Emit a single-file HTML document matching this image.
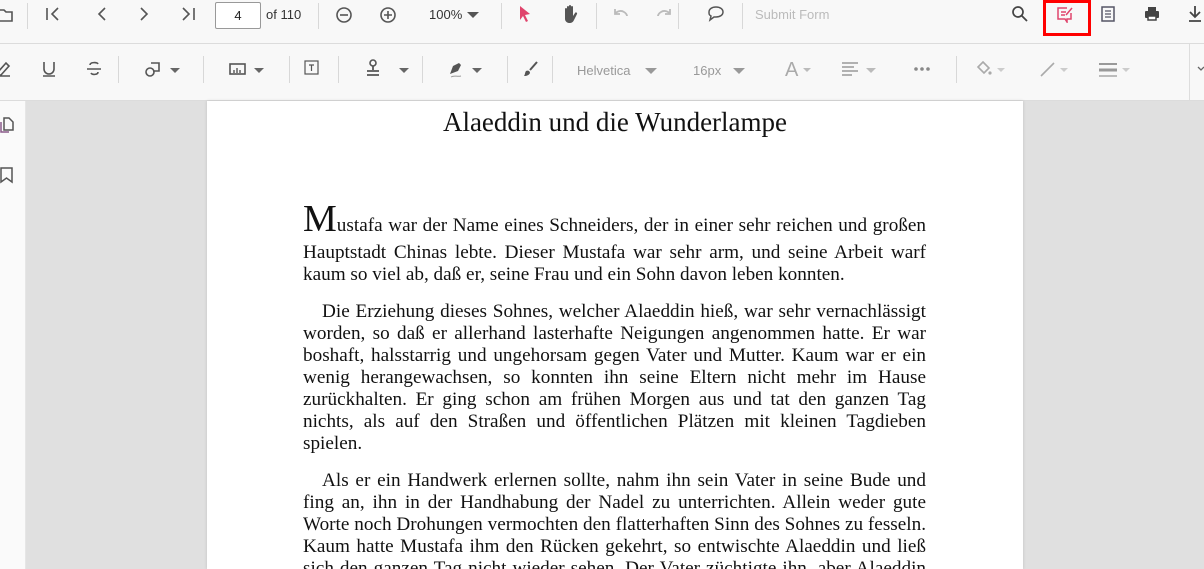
<!DOCTYPE html>
<html style="overflow:hidden;width:1204px;height:569px"><head><meta charset="utf-8"><style>
*{margin:0;padding:0;box-sizing:border-box}
body{width:1204px;height:569px;overflow:hidden;background:#e0e0e0;font-family:"Liberation Sans",sans-serif;position:relative}
.tb1{position:absolute;left:0;top:0;width:1204px;height:44px;background:#f8f8f8;border-bottom:1px solid #dcdcdc}
.tb2{position:absolute;left:0;top:44px;width:1204px;height:57px;background:#f8f8f8;border-bottom:1px solid #dcdcdc}
.side{position:absolute;left:0;top:101px;width:26px;height:468px;background:#fafafa;border-right:1px solid #e6e6e6}
.page{position:absolute;left:207px;top:101px;width:816px;height:468px;background:#fff;box-shadow:0 0 3px rgba(0,0,0,.15)}
.ic{position:absolute}
.sep{position:absolute;width:1px;background:#d8d8d8}
.t{position:absolute;font-size:13px;color:#555}
.clip{position:absolute;left:0;top:0;width:1204px;height:569px;overflow:hidden}
.txt{position:absolute;left:0;top:2px;width:1204px;height:567px}
.ln{position:absolute;left:303px;width:623px;font-family:"Liberation Serif",serif;font-size:19.2px;line-height:22px;color:#111;white-space:nowrap}
.j{text-align:justify;text-align-last:justify;white-space:normal}
.title{position:absolute;left:207px;width:816px;top:105px;text-align:center;font-family:"Liberation Serif",serif;font-size:27px;color:#111}
.car{display:inline-block;width:0;height:0;border-left:5px solid transparent;border-right:5px solid transparent;border-top:5px solid #666}
</style></head><body><div class="clip">
<div class="tb1"></div><div class="tb2"></div><div class="side"></div><div class="page"></div>

<svg class="ic" style="left:0;top:6px" width="14" height="18" viewBox="0 0 14 18"><path d="M-2 4h6l2 2h6v9H-2z" fill="none" stroke="#555" stroke-width="1.6"/></svg>
<div class="sep" style="left:27px;top:3px;height:26px"></div>
<svg class="ic" style="left:44px;top:6px" width="20" height="16"><path d="M3 2v12M14 2L8 8l6 6" fill="none" stroke="#555" stroke-width="1.6"/></svg>
<svg class="ic" style="left:92px;top:6px" width="20" height="16"><path d="M13 2L7 8l6 6" fill="none" stroke="#555" stroke-width="1.6"/></svg>
<svg class="ic" style="left:134px;top:6px" width="20" height="16"><path d="M7 2l6 6-6 6" fill="none" stroke="#555" stroke-width="1.6"/></svg>
<svg class="ic" style="left:178px;top:6px" width="20" height="16"><path d="M5 2l6 6-6 6M16 2v12" fill="none" stroke="#555" stroke-width="1.6"/></svg>
<div class="ic" style="left:215px;top:2px;width:46px;height:27px;border:1px solid #999;border-radius:2px;background:#fff;font-size:13px;text-align:center;line-height:25px;color:#222">4</div>
<div class="t" style="left:266px;top:7px;color:#333">of 110</div>
<div class="sep" style="left:318px;top:3px;height:26px"></div>
<svg class="ic" style="left:334px;top:5px" width="20" height="20"><circle cx="10" cy="10" r="7" fill="none" stroke="#555" stroke-width="1.6"/><path d="M6 10h8" stroke="#555" stroke-width="1.6"/></svg>
<svg class="ic" style="left:378px;top:5px" width="20" height="20"><circle cx="10" cy="10" r="7" fill="none" stroke="#555" stroke-width="1.6"/><path d="M6 10h8M10 6v8" stroke="#555" stroke-width="1.6"/></svg>
<div class="t" style="left:429px;top:7px;color:#333">100%</div>
<span class="ic car" style="left:467px;top:12px;border-top-color:#555;border-width:6px 6px 0"></span>
<div class="sep" style="left:501px;top:3px;height:26px"></div>
<svg class="ic" style="left:517px;top:5px" width="16" height="18"><path d="M3 1l10 8-5 1 3 6-2 1-3-6-3 4z" fill="#e0446c"/></svg>
<svg class="ic" style="left:561px;top:4px" width="18" height="20"><path d="M4 10V5a1 1 0 012 0v4V3a1 1 0 012 0v6V2a1 1 0 012 0v7V3a1 1 0 012 0v9l2-3a1 1 0 012 1l-3 6c-1 2-2 3-5 3H8c-2 0-4-2-4-4z" fill="#555"/></svg>
<div class="sep" style="left:596px;top:3px;height:26px"></div>
<svg class="ic" style="left:611px;top:6px" width="20" height="14"><path d="M4 3v5h5M4 8c2-3 6-4 9-2 2 1 3 3 3 4" fill="none" stroke="#bbb" stroke-width="1.8"/></svg>
<svg class="ic" style="left:654px;top:6px" width="20" height="14"><path d="M16 3v5h-5M16 8c-2-3-6-4-9-2-2 1-3 3-3 4" fill="none" stroke="#bbb" stroke-width="1.8"/></svg>
<div class="sep" style="left:678px;top:3px;height:26px"></div>
<svg class="ic" style="left:706px;top:5px" width="20" height="18"><path d="M10 2c4 0 7 2 7 5s-3 5-7 5H8l-4 3 1-4C3 10 3 9 3 7c0-3 3-5 7-5z" fill="none" stroke="#555" stroke-width="1.5"/></svg>
<div class="sep" style="left:742px;top:3px;height:26px"></div>
<div class="t" style="left:755px;top:7px;color:#bbb">Submit Form</div>
<svg class="ic" style="left:1011px;top:5px" width="18" height="18"><circle cx="7" cy="7" r="5" fill="none" stroke="#444" stroke-width="1.7"/><path d="M11 11l5 5" stroke="#444" stroke-width="1.8"/></svg>
<div class="ic" style="left:1043px;top:0;width:48px;height:36px;border:3px solid #f00"></div>
<svg class="ic" style="left:1056px;top:5px" width="18" height="18"><path d="M11 3H2v11h7l2 3v-3h4V8" fill="none" stroke="#e0446c" stroke-width="1.5"/><path d="M5 7h5M5 10h4M10 10l6-7" stroke="#e0446c" stroke-width="1.5"/></svg>
<svg class="ic" style="left:1100px;top:5px" width="16" height="18"><rect x="2" y="2" width="12" height="14" fill="none" stroke="#556" stroke-width="1.5"/><path d="M5 6h6M5 9h6M5 12h6" stroke="#556" stroke-width="1.3"/></svg>
<svg class="ic" style="left:1143px;top:5px" width="18" height="18"><rect x="5" y="2" width="8" height="4" fill="#444"/><rect x="2" y="6" width="14" height="7" rx="1" fill="#444"/><rect x="5" y="11" width="8" height="4" fill="#fff" stroke="#444" stroke-width="1.5"/></svg>
<svg class="ic" style="left:1186px;top:4px" width="18" height="20"><path d="M9 2v10M4 8l5 5 5-5M3 17h12" fill="none" stroke="#444" stroke-width="1.8"/></svg>

<svg class="ic" style="left:0;top:60px" width="14" height="18"><path d="M-2 12l8-9 3 3-8 9H-2zM-2 16h12" fill="none" stroke="#555" stroke-width="1.6"/></svg>
<svg class="ic" style="left:41px;top:60px" width="16" height="18"><path d="M3 2v7a5 5 0 0010 0V2M2 16h12" fill="none" stroke="#555" stroke-width="1.6"/></svg>
<svg class="ic" style="left:85px;top:60px" width="18" height="18"><path d="M13 4c-1-2-8-2-8 1M2 9h14M6 13c1 2 7 2 7-1" fill="none" stroke="#555" stroke-width="1.6"/></svg>
<div class="sep" style="left:118px;top:56px;height:27px"></div>
<svg class="ic" style="left:144px;top:60px" width="18" height="18"><circle cx="6" cy="12" r="4" fill="none" stroke="#555" stroke-width="1.6"/><path d="M7 3h8v8H9" fill="none" stroke="#555" stroke-width="1.6"/></svg>
<span class="ic car" style="left:170px;top:68px"></span>
<div class="sep" style="left:203px;top:56px;height:27px"></div>
<svg class="ic" style="left:229px;top:62px" width="18" height="14"><rect x="1" y="2" width="15" height="10" fill="none" stroke="#555" stroke-width="1.6"/><path d="M5 11V8M8 11V6M11 11V8" stroke="#555" stroke-width="1.4"/></svg>
<span class="ic car" style="left:254px;top:68px"></span>
<div class="sep" style="left:289px;top:56px;height:27px"></div>
<svg class="ic" style="left:303px;top:59px" width="18" height="18"><rect x="2" y="2" width="13" height="13" fill="none" stroke="#555" stroke-width="1.2"/><path d="M6 6h5M8.5 6v6" stroke="#555" stroke-width="1.2"/></svg>
<div class="sep" style="left:338px;top:56px;height:27px"></div>
<svg class="ic" style="left:364px;top:58px" width="18" height="20"><circle cx="9" cy="5" r="3" fill="none" stroke="#555" stroke-width="1.6"/><path d="M9 8v4M3 13h12M3 17h12" stroke="#555" stroke-width="1.8"/></svg>
<span class="ic car" style="left:399px;top:68px"></span>
<div class="sep" style="left:422px;top:56px;height:27px"></div>
<svg class="ic" style="left:447px;top:60px" width="20" height="20"><path d="M3 14l3-8 6-3 2 2-3 6-8 3z" fill="#555"/><path d="M4 17c3-2 6 0 10-1" stroke="#999" fill="none"/></svg>
<span class="ic car" style="left:472px;top:68px"></span>
<div class="sep" style="left:507px;top:56px;height:27px"></div>
<svg class="ic" style="left:522px;top:60px" width="18" height="18"><path d="M15 2L8 10" stroke="#555" stroke-width="2"/><path d="M4 11c2-1 4 0 4 2-1 2-3 3-6 3 1-1 1-4 2-5z" fill="#555"/></svg>
<div class="sep" style="left:552px;top:56px;height:27px"></div>
<div class="t" style="left:577px;top:63px;color:#999">Helvetica</div>
<span class="ic car" style="left:645px;top:68px;border-top-color:#999;border-width:6px 6px 0"></span>
<div class="t" style="left:693px;top:63px;color:#999">16px</div>
<span class="ic car" style="left:733px;top:68px;border-top-color:#999;border-width:6px 6px 0"></span>
<div class="t" style="left:785px;top:59px;color:#aaa;font-size:20px">A</div>
<span class="ic car" style="left:803px;top:68px;border-top-color:#bbb;border-width:4px 4px 0"></span>
<svg class="ic" style="left:842px;top:62px" width="16" height="14"><path d="M0 1h16M0 5h12M0 9h16M0 13h10" stroke="#999" stroke-width="1.6"/></svg>
<span class="ic car" style="left:866px;top:68px;border-top-color:#bbb"></span>
<svg class="ic" style="left:913px;top:66px" width="18" height="6"><circle cx="3" cy="3" r="1.8" fill="#888"/><circle cx="9" cy="3" r="1.8" fill="#888"/><circle cx="15" cy="3" r="1.8" fill="#888"/></svg>
<div class="sep" style="left:956px;top:56px;height:27px"></div>
<svg class="ic" style="left:976px;top:61px" width="16" height="16"><path d="M7 1l6 6-5 5-6-6z" fill="none" stroke="#aaa" stroke-width="1.6"/><circle cx="14" cy="12" r="1.6" fill="#aaa"/></svg>
<span class="ic car" style="left:997px;top:68px;border-top-color:#ccc;border-width:4px 4px 0"></span>
<svg class="ic" style="left:1040px;top:61px" width="16" height="16"><path d="M1 15L14 2" stroke="#aaa" stroke-width="1.6"/></svg>
<span class="ic car" style="left:1060px;top:68px;border-top-color:#ccc;border-width:4px 4px 0"></span>
<svg class="ic" style="left:1099px;top:62px" width="18" height="16"><path d="M0 2h18" stroke="#999" stroke-width="2"/><path d="M0 8h18" stroke="#999" stroke-width="3"/><path d="M0 14h18" stroke="#999" stroke-width="1.2"/></svg>
<span class="ic car" style="left:1122px;top:68px;border-top-color:#ccc;border-width:4px 4px 0"></span>
<div class="sep" style="left:1189px;top:44px;height:56px;background:#ddd"></div>
<svg class="ic" style="left:1197px;top:66px" width="7" height="6"><path d="M1 1l3 3 3-3" fill="none" stroke="#666" stroke-width="1.3"/></svg>

<svg class="ic" style="left:0;top:117px" width="14" height="18"><path d="M4 1h5l4 4v8H4z" fill="none" stroke="#555" stroke-width="1.5"/><path d="M1 5v10h8" fill="none" stroke="#8a5a8a" stroke-width="1.5"/></svg>
<svg class="ic" style="left:0;top:166px" width="14" height="18"><path d="M1 2h11v14l-5.5-4L1 16z" fill="none" stroke="#555" stroke-width="1.5"/></svg>

<div class="txt">
<div class="title">Alaeddin und die Wunderlampe</div>
<div class="ln j" style="top:202px;line-height:30px"><span style="font-size:38px;line-height:30px">M</span>ustafa war der Name eines Schneiders, der in einer sehr reichen und großen</div>
<div class="ln j" style="top:240px">Hauptstadt Chinas lebte. Dieser Mustafa war sehr arm, und seine Arbeit warf</div>
<div class="ln" style="top:262px">kaum so viel ab, daß er, seine Frau und ein Sohn davon leben konnten.</div>

<div class="ln j" style="top:299px;text-indent:19px">Die Erziehung dieses Sohnes, welcher Alaeddin hieß, war sehr vernachlässigt</div>
<div class="ln j" style="top:321px">worden, so daß er allerhand lasterhafte Neigungen angenommen hatte. Er war</div>
<div class="ln j" style="top:343px">boshaft, halsstarrig und ungehorsam gegen Vater und Mutter. Kaum war er ein</div>
<div class="ln j" style="top:365px">wenig herangewachsen, so konnten ihn seine Eltern nicht mehr im Hause</div>
<div class="ln j" style="top:387px">zurückhalten. Er ging schon am frühen Morgen aus und tat den ganzen Tag</div>
<div class="ln j" style="top:409px">nichts, als auf den Straßen und öffentlichen Plätzen mit kleinen Tagdieben</div>
<div class="ln" style="top:431px">spielen.</div>

<div class="ln j" style="top:468px;text-indent:19px">Als er ein Handwerk erlernen sollte, nahm ihn sein Vater in seine Bude und</div>
<div class="ln j" style="top:490px">fing an, ihn in der Handhabung der Nadel zu unterrichten. Allein weder gute</div>
<div class="ln j" style="top:512px">Worte noch Drohungen vermochten den flatterhaften Sinn des Sohnes zu fesseln.</div>
<div class="ln j" style="top:534px">Kaum hatte Mustafa ihm den Rücken gekehrt, so entwischte Alaeddin und ließ</div>
<div class="ln j" style="top:556px">sich den ganzen Tag nicht wieder sehen. Der Vater züchtigte ihn, aber Alaeddin</div>
</div>
</div></body></html>
